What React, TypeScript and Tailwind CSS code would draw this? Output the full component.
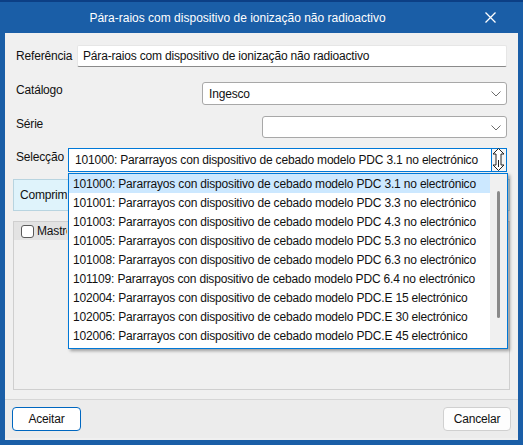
import React from 'react';

const items = [
  '101000: Pararrayos con dispositivo de cebado modelo PDC 3.1 no electrónico',
  '101001: Pararrayos con dispositivo de cebado modelo PDC 3.3 no electrónico',
  '101003: Pararrayos con dispositivo de cebado modelo PDC 4.3 no electrónico',
  '101005: Pararrayos con dispositivo de cebado modelo PDC 5.3 no electrónico',
  '101008: Pararrayos con dispositivo de cebado modelo PDC 6.3 no electrónico',
  '101109: Pararrayos con dispositivo de cebado modelo PDC 6.4 no electrónico',
  '102004: Pararrayos con dispositivo de cebado modelo PDC.E 15 electrónico',
  '102005: Pararrayos con dispositivo de cebado modelo PDC.E 30 electrónico',
  '102006: Pararrayos con dispositivo de cebado modelo PDC.E 45 electrónico',
];

const Chevron = () => (
  <svg width="10" height="6" viewBox="0 0 10 6" className="mr-[5px]">
    <path d="M0.5 0.5 L5 5 L9.5 0.5" fill="none" stroke="#6b6b6b" strokeWidth="1" />
  </svg>
);

export default function App() {
  return (
    <div
      className="w-[523px] h-[445px] flex flex-col bg-[#1a5ea7] text-[12px] tracking-[-0.18px] text-[#111] overflow-hidden"
      style={{ fontFamily: '"Liberation Sans", Arial, sans-serif' }}
    >
      {/* Title bar */}
      <div className="h-[33px] flex items-center border-t-2 border-[#0c3f85] flex-shrink-0">
        <div className="w-[475px] text-center text-white text-[12px] tracking-normal">
          Pára-raios com dispositivo de ionização não radioactivo
        </div>
        <svg width="11" height="11" viewBox="0 0 11 11" className="ml-[10px]">
          <path d="M0.5 0.5 L10.5 10.5 M10.5 0.5 L0.5 10.5" stroke="#fff" strokeWidth="1.3" />
        </svg>
      </div>

      {/* Body */}
      <div className="flex-1 flex flex-col mx-[5px] bg-[#f0f0f0] relative">
        <div className="flex flex-col px-[8px]">
          {/* Referência */}
          <div className="mt-[12px] h-[22px] flex items-center px-[3px]">
            <span className="w-[61px]">Referência</span>
            <div className="flex-1 h-[22px] bg-white border border-[#e6e6e6] border-b-[#8a8a8a] flex items-center pl-[5px] rounded-[2px] whitespace-nowrap">
              Pára-raios com dispositivo de ionização não radioactivo
            </div>
          </div>

          {/* Catálogo */}
          <div className="mt-[15px] h-[23px] flex items-start px-[3px]">
            <span className="leading-[16px] flex-1">Catálogo</span>
            <div className="w-[305px] h-[23px] bg-white border border-[#a8a8a8] rounded-[3px] flex items-center justify-between pl-[6px]">
              <span>Ingesco</span>
              <Chevron />
            </div>
          </div>

          {/* Série */}
          <div className="mt-[11px] h-[22px] flex items-start px-[3px]">
            <span className="leading-[16px] flex-1">Série</span>
            <div className="w-[245px] h-[22px] bg-white border border-[#a8a8a8] rounded-[3px] flex items-end justify-end pb-[6px]">
              <Chevron />
            </div>
          </div>

          {/* Selecção */}
          <div className="mt-[10px] h-[24px] flex items-start px-[3px]">
            <span className="leading-[16px] w-[52px] mt-[1px]">Selecção</span>
            <div className="flex-1 h-[24px] bg-white border border-[#0078d7] flex items-center pl-[6px] whitespace-nowrap overflow-hidden">
              101000: Pararrayos con dispositivo de cebado modelo PDC 3.1 no electrónico
            </div>
            <div className="w-[15px] h-[24px] border border-l-0 border-[#0078d7] bg-[#f5f5f5] relative">
              <svg width="13" height="23" viewBox="0 0 13 23" className="absolute left-[0px] top-[-1px]">
                <path
                  d="M6.5 0.5 L12 6 L9 6 L9 17 L12 17 L6.5 22.5 L1 17 L4 17 L4 6 L1 6 Z"
                  fill="#fff"
                  stroke="#222"
                  strokeWidth="1"
                />
                <path d="M6.5 12 L6.5 19" stroke="#222" strokeWidth="1" />
              </svg>
            </div>
          </div>

          {/* Comprimento box (mostly hidden behind the open list) */}
          <div className="mt-[7px] h-[32px] bg-[#dff3fb] border border-[#b8d4e0] flex items-center pl-[6px]">
            <span className="w-[47px] overflow-hidden whitespace-nowrap">Comprimento</span>
          </div>

          {/* Mastro panel */}
          <div className="mt-[10px] h-[169px] border border-[#cfcfcf] flex flex-col">
            <div className="h-[18px] bg-[#e3e3e3] flex items-center pl-[7px] gap-[3px]">
              <div className="w-[13px] h-[13px] bg-white border border-[#5a5a5a] rounded-[3px]" />
              <span className="w-[30px] overflow-hidden whitespace-nowrap">Mastro</span>
            </div>
          </div>
        </div>

        {/* Footer */}
        <div className="mt-[9px] border-t border-[#d6d6d6] bg-[#ececec] flex justify-between px-[7px] pt-[7px] pb-[7px]">
          <button className="w-[69px] h-[24px] bg-white border border-[#0067c0] rounded-[4px] text-[12px]">
            Aceitar
          </button>
          <button className="w-[68px] h-[24px] bg-[#fdfdfd] border border-[#d0d0d0] rounded-[4px] text-[12px]">
            Cancelar
          </button>
        </div>

        {/* Open dropdown list */}
        <div className="absolute top-[140px] left-[63px] w-[440px] h-[176px] bg-white border border-[#0078d7] shadow-[2px_2px_3px_rgba(0,0,0,0.35)] flex">
          <div className="flex-1 flex flex-col">
            {items.map((t, i) => (
              <div
                key={t}
                className={`h-[19px] flex items-center pl-[4px] whitespace-nowrap ${i === 0 ? 'bg-[#cce8ff]' : ''}`}
              >
                {t}
              </div>
            ))}
          </div>
          <div className="w-[17px] bg-[#f0f0f0] flex justify-center pt-[17px]">
            <div className="w-[3px] h-[127px] bg-[#8a8a8a] rounded-full" />
          </div>
        </div>
      </div>
      <div className="h-[5px] flex-shrink-0" />
    </div>
  );
}
